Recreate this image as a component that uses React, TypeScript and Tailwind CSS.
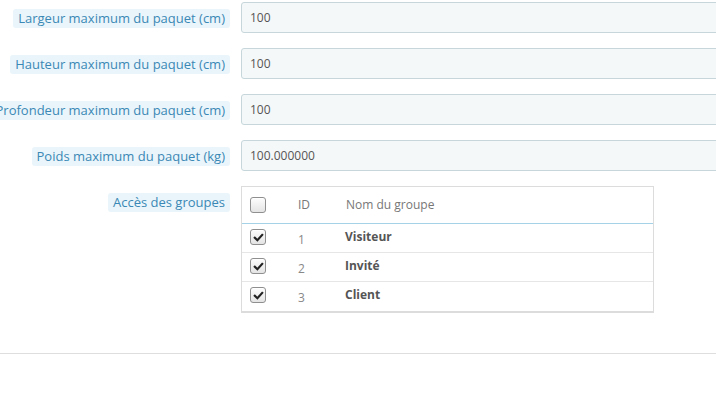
import React from 'react';

const fields = [
  { label: 'Largeur maximum du paquet (cm)', value: '100' },
  { label: 'Hauteur maximum du paquet (cm)', value: '100' },
  { label: 'Profondeur maximum du paquet (cm)', value: '100' },
  { label: 'Poids maximum du paquet (kg)', value: '100.000000' },
];

const groups = [
  { id: 1, name: 'Visiteur' },
  { id: 2, name: 'Invité' },
  { id: 3, name: 'Client' },
];

const Check = ({ checked }: { checked?: boolean }) => (
  <span className="flex h-4 w-4 items-center justify-center rounded-[3px] border border-[#8f8f8f] bg-gradient-to-b from-[#fdfdfd] to-[#e4e4e4] shadow-[inset_0_1px_0_#fff]">
    {checked && (
      <svg viewBox="0 0 12 12" className="h-[11px] w-[11px]">
        <path d="M2 6.2 L4.8 9 L10 3.2" fill="none" stroke="#222" strokeWidth={2.4} strokeLinecap="square" />
      </svg>
    )}
  </span>
);

const Label = ({ children }: { children: React.ReactNode }) => (
  <div className="flex w-[230px] shrink-0 items-start justify-end pt-[7px]">
    <span className="whitespace-nowrap rounded-[3px] bg-[#eaf5fb] px-[5px] text-[13px] leading-[19px] text-[#3a88b5]">
      {children}
    </span>
  </div>
);

const App = () => {
  return (
    <div className="h-[398px] w-[716px] overflow-hidden bg-white font-['Open_Sans',sans-serif] text-[#555]">
      <div className="flex flex-col gap-[15px] pt-[2px]">
        {fields.map((f) => (
          <div key={f.label} className="flex gap-[11px]">
            <Label>{f.label}</Label>
            <div className="h-[31px] w-[520px] shrink-0 rounded-[3px] border border-[#c7d6db] bg-[#f5f8f9] px-[8px] text-[12px] leading-[29px] text-[#555]">
              {f.value}
            </div>
          </div>
        ))}

        <div className="flex items-start gap-[11px]">
          <Label>Accès des groupes</Label>
          <div className="w-[413px] shrink-0 border border-b-2 border-[#dcdcdc]">
            <div className="flex h-[37px] items-center border-b border-[#a6d2e8] text-[12px] text-[#777]">
              <div className="w-[56px] pl-[8px]">
                <Check />
              </div>
              <div className="w-[48px]">ID</div>
              <div>Nom du groupe</div>
            </div>
            {groups.map((g, i) => (
              <div
                key={g.id}
                className={`flex h-[29px] items-start text-[12px] ${i < groups.length - 1 ? 'border-b border-[#e6e6e6]' : ''}`}
              >
                <div className="w-[56px] pl-[8px] pt-[5px]">
                  <Check checked />
                </div>
                <div className="w-[47px] pt-[7px] text-[#888]">{g.id}</div>
                <div className="pt-[4px] font-bold text-[#555]">{g.name}</div>
              </div>
            ))}
          </div>
        </div>
      </div>
      <div className="mt-[40px] border-t border-[#dedede]" />
    </div>
  );
};

export default App;
